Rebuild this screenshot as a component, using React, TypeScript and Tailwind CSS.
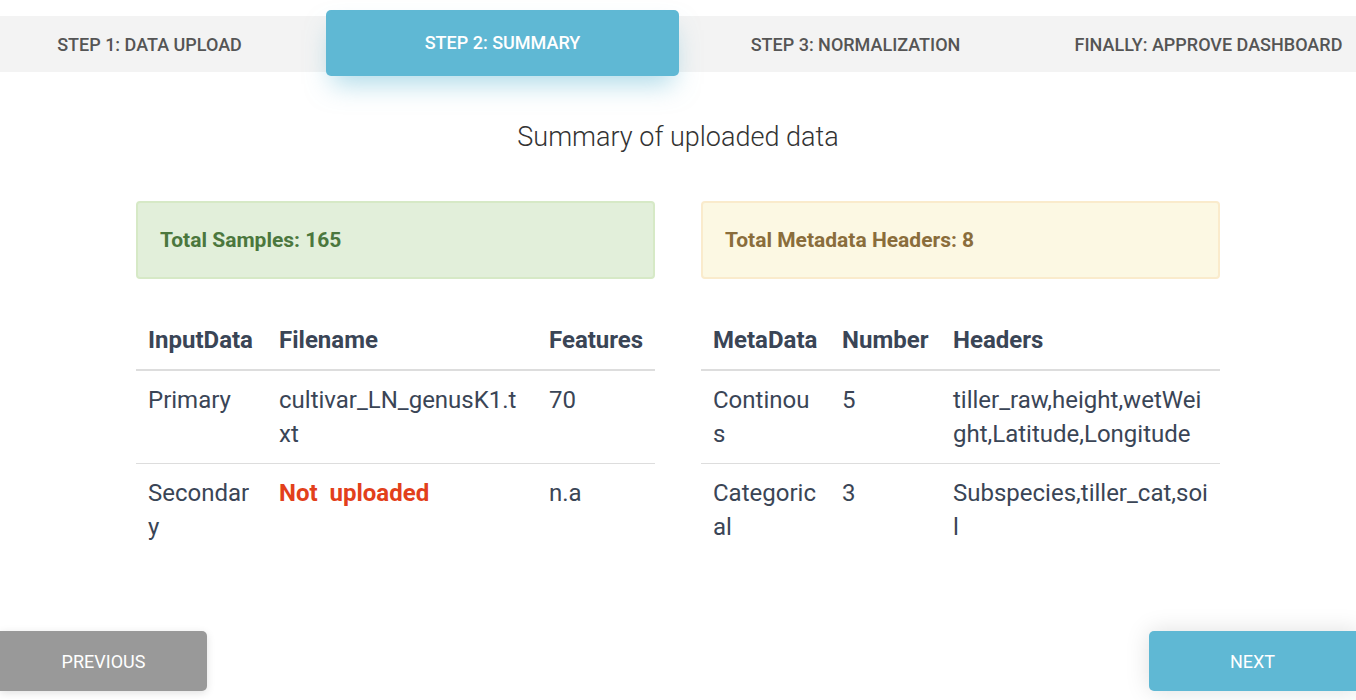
import React from "react";

const steps = [
  "STEP 1: DATA UPLOAD",
  "STEP 2: SUMMARY",
  "STEP 3: NORMALIZATION",
  "FINALLY: APPROVE DASHBOARD",
];

const inputRows = [
  { kind: "Primary", file: "cultivar_LN_genusK1.txt", features: "70", missing: false },
  { kind: "Secondary", file: "Not\u00a0 uploaded", features: "n.a", missing: true },
];

const metaRows = [
  { kind: "Continous", number: "5", headers: "tiller_raw,height,wetWeight,Latitude,Longitude" },
  { kind: "Categorical", number: "3", headers: "Subspecies,tiller_cat,soil" },
];

function App() {
  const active = 1;

  return (
    <div className="w-full h-[700px] overflow-hidden bg-white font-['Roboto',sans-serif] text-[#3a4556]">
      {/* wizard steps */}
      <div className="mt-4 h-14 bg-[#f3f3f3]">
        <div className="flex w-[1412px] -ml-[27px] h-14 items-start">
          {steps.map((s, i) =>
            i === active ? (
              <div
                key={s}
                className="relative z-10 w-[353px] h-[66px] -mt-[6px] flex items-center justify-center rounded-[5px] bg-[#5fb8d4] text-white text-[18px] font-medium shadow-[0_14px_26px_-6px_rgba(95,184,212,0.5)]"
              >
                <span className="-mt-[2px]">{s}</span>
              </div>
            ) : (
              <div
                key={s}
                className="w-[353px] h-14 flex items-center justify-center text-[#555] text-[18px] font-medium"
              >
                {s}
              </div>
            )
          )}
        </div>
      </div>

      <h2 className="mt-[47px] text-center text-[27px] leading-[36px] font-light text-[#333]">
        Summary of uploaded data
      </h2>

      <div className="mx-auto mt-[46px] w-[1084px] grid grid-cols-2 gap-[46px]">
        <div>
          <div className="h-[78px] rounded-[4px] border-2 border-[#d6e9c6] bg-[#e2efda] px-[22px] pt-px flex items-center text-[21px] font-bold text-[#4b773d]">
            Total Samples: 165
          </div>
          <table className="mt-[32px] w-full table-fixed border-collapse text-[24px] leading-[34px]">
            <colgroup>
              <col className="w-[131px]" />
              <col className="w-[270px]" />
              <col />
            </colgroup>
            <thead>
              <tr className="border-b-2 border-[#ddd]">
                <th className="p-3 text-left font-bold">InputData</th>
                <th className="p-3 text-left font-bold">Filename</th>
                <th className="p-3 text-left font-bold">Features</th>
              </tr>
            </thead>
            <tbody>
              {inputRows.map((r, i) => (
                <tr key={r.kind} className={i === 0 ? "border-b border-[#ddd]" : ""}>
                  <td className="p-3 align-top break-all">{r.kind}</td>
                  <td
                    className={
                      r.missing
                        ? "p-3 align-top break-all font-bold text-[#e2401b] whitespace-pre-wrap"
                        : "p-3 align-top break-all"
                    }
                  >
                    {r.file}
                  </td>
                  <td className="p-3 align-top break-all">{r.features}</td>
                </tr>
              ))}
            </tbody>
          </table>
        </div>

        <div>
          <div className="h-[78px] rounded-[4px] border-2 border-[#faebcc] bg-[#fcf8e3] px-[22px] pt-px flex items-center text-[21px] font-bold text-[#8a6d3b]">
            Total Metadata Headers: 8
          </div>
          <table className="mt-[32px] w-full table-fixed border-collapse text-[24px] leading-[34px]">
            <colgroup>
              <col className="w-[129px]" />
              <col className="w-[111px]" />
              <col />
            </colgroup>
            <thead>
              <tr className="border-b-2 border-[#ddd]">
                <th className="p-3 text-left font-bold">MetaData</th>
                <th className="p-3 text-left font-bold">Number</th>
                <th className="p-3 text-left font-bold">Headers</th>
              </tr>
            </thead>
            <tbody>
              {metaRows.map((r, i) => (
                <tr key={r.kind} className={i === 0 ? "border-b border-[#ddd]" : ""}>
                  <td className="p-3 align-top break-all">{r.kind}</td>
                  <td className="p-3 align-top break-all">{r.number}</td>
                  <td className="p-3 align-top break-all">{r.headers}</td>
                </tr>
              ))}
            </tbody>
          </table>
        </div>
      </div>

      <div className="mt-[75px] flex justify-between">
        <button className="w-[207px] h-[60px] rounded-r-[5px] bg-[#999] text-white text-[18px] font-normal shadow-[0_2px_8px_rgba(0,0,0,0.12)]">
          PREVIOUS
        </button>
        <button className="w-[212px] -mr-[5px] h-[60px] rounded-[5px] bg-[#5fb8d4] text-white text-[18px] font-normal shadow-[0_0_24px_rgba(0,0,0,0.13)]">
          <span className="-ml-[5px]">NEXT</span>
        </button>
      </div>
    </div>
  );
}

export default App;
